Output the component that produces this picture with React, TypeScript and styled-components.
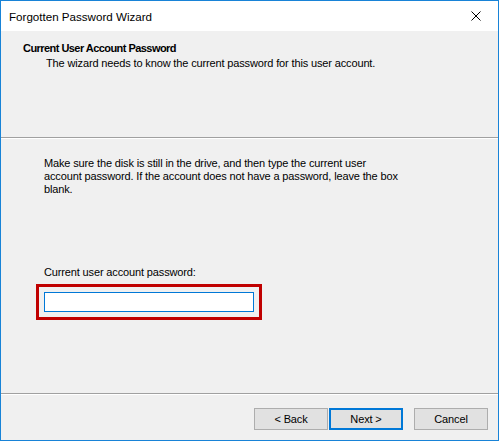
import React from "react";
import styled, { createGlobalStyle } from "styled-components";

const GlobalStyle = createGlobalStyle`
  html, body { margin: 0; padding: 0; background: #f0f0f0; }
  * { box-sizing: border-box; }
`;

const Window = styled.div`
  width: 499px;
  height: 441px;
  border: 1px solid #1883d7;
  background: #f0f0f0;
  display: flex;
  flex-direction: column;
  font-family: "Liberation Sans", Arial, sans-serif;
  font-size: 11px;
  line-height: 13px;
  letter-spacing: -0.14px;
  color: #000;
`;

const TitleBar = styled.div`
  height: 30px;
  flex: none;
  background: #fff;
  display: flex;
  align-items: center;
  justify-content: space-between;
  padding: 0 0 0 8px;
`;

const TitleText = styled.div`
  font-size: 11.6px;
  line-height: 14px;
  letter-spacing: 0;
  color: #000;
  padding-top: 1px;
`;

const CloseButton = styled.div`
  width: 46px;
  height: 30px;
  display: flex;
  align-items: center;
  justify-content: center;
  padding-left: 2px;
`;

const Header = styled.div`
  height: 106px;
  flex: none;
  padding: 11px 0 0 22px;
`;

const HeaderTitle = styled.div`
  font-weight: bold;
  letter-spacing: -0.55px;
`;

const HeaderSubtitle = styled.div`
  margin: 2px 0 0 23px;
`;

const Separator = styled.div`
  height: 2px;
  flex: none;
  border-top: 1px solid #a0a0a0;
  border-bottom: 1px solid #ffffff;
`;

const Body = styled.div`
  flex: 1;
  padding: 18px 0 0 43px;
`;

const Paragraph = styled.p`
  margin: 0;
`;

const FieldLabel = styled.div`
  margin-top: 70px;
`;

const Highlight = styled.div`
  margin: 5px 0 0 -8px;
  width: 226px;
  padding: 5px;
  border: 3px solid #c00000;
`;

const PasswordInput = styled.input`
  display: block;
  width: 210px;
  height: 20px;
  margin: 0;
  padding: 0 3px;
  border: 1px solid #0078d7;
  background: #fff;
  outline: none;
  font-family: inherit;
  font-size: 11px;
`;

const Footer = styled.div`
  height: 45px;
  flex: none;
  display: flex;
  justify-content: flex-end;
  align-items: flex-start;
  padding: 13px 10px 0 0;
`;

const Button = styled.button<{ $default?: boolean; $gap: number }>`
  width: 74px;
  height: 22px;
  margin: 0 ${(p) => p.$gap}px 0 0;
  padding: 0;
  background: #e1e1e1;
  border: ${(p) => (p.$default ? "2px solid #0078d7" : "1px solid #adadad")};
  font-family: "Liberation Sans", Arial, sans-serif;
  font-size: 11px;
  letter-spacing: -0.14px;
  color: #000;
  display: flex;
  align-items: center;
  justify-content: center;
`;

export default function App() {
  return (
    <>
      <GlobalStyle />
      <Window>
        <TitleBar>
          <TitleText>Forgotten Password Wizard</TitleText>
          <CloseButton>
            <svg width="10" height="10" viewBox="0 0 10 10">
              <path d="M0.5 0.5 L9.5 9.5 M9.5 0.5 L0.5 9.5" stroke="#000" strokeWidth="1" fill="none" />
            </svg>
          </CloseButton>
        </TitleBar>
        <Header>
          <HeaderTitle>Current User Account Password</HeaderTitle>
          <HeaderSubtitle>The wizard needs to know the current password for this user account.</HeaderSubtitle>
        </Header>
        <Separator />
        <Body>
          <Paragraph>
            Make sure the disk is still in the drive, and then type the current user
            <br />
            account password. If the account does not have a password, leave the box
            <br />
            blank.
          </Paragraph>
          <FieldLabel>Current user account password:</FieldLabel>
          <Highlight>
            <PasswordInput type="password" />
          </Highlight>
        </Body>
        <Separator />
        <Footer>
          <Button $gap={1}>&lt; Back</Button>
          <Button $default $gap={11}>Next &gt;</Button>
          <Button $gap={0}>Cancel</Button>
        </Footer>
      </Window>
    </>
  );
}
